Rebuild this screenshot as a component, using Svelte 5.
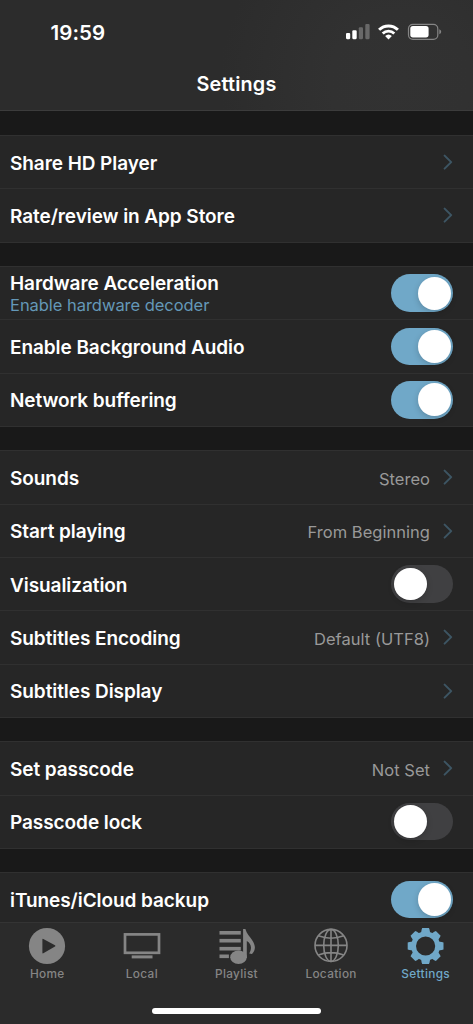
<script>
  const groups = [
    [{ label: 'Share HD Player' }, { label: 'Rate/review in App Store' }],
    [
      { label: 'Hardware Acceleration', sub: 'Enable hardware decoder', on: true },
      { label: 'Enable Background Audio', on: true },
      { label: 'Network buffering', on: true }
    ],
    [
      { label: 'Sounds', value: 'Stereo' },
      { label: 'Start playing', value: 'From Beginning' },
      { label: 'Visualization', on: false },
      { label: 'Subtitles Encoding', value: 'Default (UTF8)' },
      { label: 'Subtitles Display' }
    ],
    [{ label: 'Set passcode', value: 'Not Set' }, { label: 'Passcode lock', on: false }],
    [{ label: 'iTunes/iCloud backup', on: true }]
  ];
  const tabs = ['Home', 'Local', 'Playlist', 'Location', 'Settings'];
  const teeth = [0, 45, 90, 135, 180, 225, 270, 315];
</script>

<div class="screen">
  <header>
    <div class="status">
      <span class="time">19:59</span>
      <svg class="indicators" width="98" height="20" viewBox="345 22 98 20">
        <g fill="#fff">
          <rect x="346" y="33" width="4.2" height="6.2" rx="1.1" />
          <rect x="352.3" y="30.3" width="4.4" height="8.9" rx="1.1" />
          <rect x="358.8" y="27.2" width="4.2" height="12" rx="1.1" opacity=".27" />
          <rect x="365.3" y="24" width="4.3" height="15.2" rx="1.1" opacity=".27" />
        </g>
        <g fill="none" stroke="#fff" stroke-width="3">
          <path d="M379.1 29.8 A13.4 13.4 0 0 1 397.9 29.8" />
          <path d="M382.7 33.5 A8.3 8.3 0 0 1 394.3 33.5" stroke-width="2.8" />
        </g>
        <path d="M385.1 36 A5 5 0 0 1 391.9 36 L388.5 39.4Z" fill="#fff" />
        <rect x="408.5" y="24.3" width="29.3" height="15" rx="4.4" fill="none" stroke="#858585" stroke-width="1.2" />
        <rect x="410.3" y="26.1" width="18.3" height="11.3" rx="2.6" fill="#fff" />
        <path d="M439.3 29.3 Q441.2 30.2 441.2 31.8 Q441.2 33.4 439.3 34.3Z" fill="#858585" />
      </svg>
    </div>
    <h1>Settings</h1>
  </header>

  <main>
    {#each groups as group}
      <section>
        {#each group as row}
          <div class="row">
            <div class="text" class:stacked={row.sub}>
              <span class="label">{row.label}</span>
              {#if row.sub}<span class="sub">{row.sub}</span>{/if}
            </div>
            {#if row.on !== undefined}
              <span class="toggle" class:on={row.on}><span class="knob"></span></span>
            {:else}
              {#if row.value}<span class="value">{row.value}</span>{/if}
              <svg class="chevron" width="10" height="16" viewBox="0 0 10 16">
                <path d="M1.6 1.6 L8.2 8.1 L1.6 14.6" fill="none" stroke="#3d5563" stroke-width="2" stroke-linecap="round" stroke-linejoin="round" />
              </svg>
            {/if}
          </div>
        {/each}
      </section>
    {/each}
  </main>

  <footer>
    <nav>
      {#each tabs as tab}
        <div class="tab" class:active={tab === 'Settings'}>
          <svg width="40" height="40" viewBox="-20 -20 40 40" fill="none">
            {#if tab === 'Home'}
              <circle r="18.1" fill="currentColor" />
              <path d="M-4.6 -6.6 Q-4.6 -7.6 -3.7 -7.1 L8 -.7 Q9 0 8 .6 L-3.7 7.3 Q-4.6 7.7 -4.6 6.7Z" fill="#2c2c2c" />
            {:else if tab === 'Local'}
              <rect x="-17" y="-11.6" width="34" height="18.4" stroke="currentColor" stroke-width="2.7" />
              <rect x="-10.3" y="9.4" width="20.8" height="3" fill="currentColor" />
            {:else if tab === 'Playlist'}
              <g fill="currentColor">
                <rect x="-16.5" y="-15" width="21.3" height="3.6" />
                <rect x="-16.5" y="-7.1" width="21.3" height="3.6" />
                <rect x="-16.5" y=".9" width="21.3" height="3.6" />
                <rect x="-16.5" y="8.5" width="9.4" height="3.6" />
                <ellipse cx="2.5" cy="11.2" rx="8.3" ry="6.7" />
                <path d="M7.1 -17 H9.4 C10.6 -12.4 13.8 -9.6 16.2 -5.8 C20.2 .2 19.4 4.2 16 7.9 L13.2 7.4 C16.2 2.4 15.4 -2.4 10.8 -5 V12 H7.1Z" />
              </g>
            {:else if tab === 'Location'}
              <g stroke="currentColor" stroke-width="1.6" transform="translate(0 -.6)">
                <circle r="16" />
                <ellipse rx="7.3" ry="16" />
                <path d="M0 -16 V16 M-16 0 H16 M-12.7 -9.6 Q0 -4.8 12.7 -9.6 M-12.7 9.6 Q0 4.8 12.7 9.6" />
              </g>
            {:else}
              <g transform="translate(-.4 0)">
                <circle r="12" stroke="currentColor" stroke-width="4.8" />
                {#each teeth as angle}
                  <path d="M-4.6 -12.8 L-4 -16.2 L-3.4 -17.9 H3.4 L4 -16.2 L4.6 -12.8Z" fill="currentColor" transform="rotate({angle})" />
                {/each}
              </g>
            {/if}
          </svg>
          <span>{tab}</span>
        </div>
      {/each}
    </nav>
    <div class="home-bar"></div>
  </footer>
</div>

<style>
  :global(body) { background: #191919; }
  * { box-sizing: border-box; }
  .screen {
    height: 1024px;
    display: flex;
    flex-direction: column;
    overflow: hidden;
    background: #191919;
    color: #fff;
    font-family: Inter, "Liberation Sans", sans-serif;
  }
  header {
    flex: none;
    height: 111px;
    border-bottom: 1px solid #3c3c3c;
    background: radial-gradient(circle at 400px 80px, #323232 0, #313131 70px, #2c2c2c 180px);
  }
  .status {
    height: 64px;
    padding: 0 30px 0 50.5px;
    display: flex;
    align-items: center;
    justify-content: space-between;
  }
  .time { font-size: 20.5px; font-weight: 600; letter-spacing: .1px; }
  h1 {
    margin: 0;
    text-align: center;
    font-size: 19.8px;
    line-height: 40px;
    font-weight: 600;
    letter-spacing: .2px;
  }
  main {
    flex: 1;
    min-height: 0;
    overflow: hidden;
    padding-top: 24px;
    display: flex;
    flex-direction: column;
    gap: 24.3px;
  }
  section {
    flex: none;
    background: #262626;
    border-bottom: 1px solid #303030;
    margin-bottom: -1px;
  }
  .row {
    height: 53.33px;
    padding: 0 19.7px 0 10px;
    display: flex;
    align-items: center;
    border-top: 1px solid #303030;
  }
  .text {
    flex: 1;
    display: flex;
    flex-direction: column;
  }
  .label { font-size: 19px; line-height: 22px; font-weight: 600; letter-spacing: -.07px; padding-top: 3.4px; }
  .stacked .label { padding-top: 2px; }
  .sub { font-size: 16.5px; line-height: 21px; letter-spacing: -.04px; color: #6498b8; }
  .value { font-size: 16.5px; letter-spacing: .03px; color: #999; margin-right: 13.3px; padding-top: 3px; }
  .toggle {
    width: 62px;
    height: 37.5px;
    padding: 2.4px;
    display: flex;
    border-radius: 19px;
    background: #404042;
  }
  .toggle.on { justify-content: flex-end; background: #70a8c8; }
  .knob {
    width: 32.8px;
    height: 32.8px;
    border-radius: 50%;
    background: #fff;
    box-shadow: 0 2px 6px rgba(0, 0, 0, .18);
  }
  footer {
    flex: none;
    height: 102px;
    border-top: 1px solid #343434;
    background: #2b2b2b;
    display: flex;
    flex-direction: column;
    align-items: center;
  }
  nav { width: 100%; height: 84.5px; display: grid; grid-template-columns: repeat(5, 1fr); padding-top: 3px; }
  .tab {
    display: flex;
    flex-direction: column;
    align-items: center;
    color: #858585;
    font-size: 11.8px;
    font-weight: 500;
    letter-spacing: .35px;
  }
  .tab span { line-height: 16px; }
  .active { color: #70a8c8; }
  .home-bar { width: 168.5px; height: 6.5px; border-radius: 4px; background: #fff; }
</style>
